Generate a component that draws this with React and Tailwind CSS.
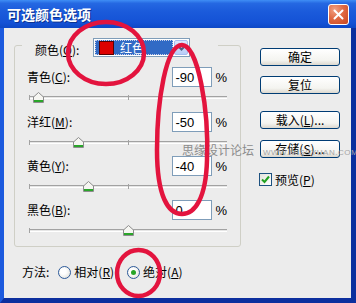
import React from "react";

const rows = [
  { label: "青色", key: "C", value: -90 },
  { label: "洋红", key: "M", value: -50 },
  { label: "黄色", key: "Y", value: -40 },
  { label: "黑色", key: "B", value: 0 },
];

const TRACK = 198;

function Thumb() {
  return (
    <svg width="11" height="11" viewBox="0 0 11 11">
      <path d="M5.5 0.5 L10.5 5 L10.5 10.5 L0.5 10.5 L0.5 5 Z" fill="#f6f6f2" stroke="#8d8d8d" />
      <path d="M1 8 H10 V10 H1 Z" fill="#2aa52a" />
    </svg>
  );
}

function Slider({ value }) {
  const pos = ((value + 100) / 200) * TRACK;
  return (
    <div className="relative ml-[14px] mr-[13px] h-[20px] pt-[9px]">
      <div className="h-[3px] border-t border-[#a2a2a2] bg-[#e6e6e6] border-b border-b-white" />
      <div className="absolute left-0 top-[8px] w-px h-[5px] bg-[#a2a2a2]" />
      <div className="absolute left-[99px] top-[8px] w-px h-[5px] bg-[#a2a2a2]" />
      <div className="absolute top-[5px] flex" style={{ left: pos - 5.5 }}>
        <Thumb />
      </div>
    </div>
  );
}

function Btn({ children, className = "" }) {
  return (
    <div
      className={
        "h-[18px] w-[80px] rounded-[3px] border border-[#003c74] bg-[linear-gradient(to_bottom,#ffffff_0%,#f4f4f0_70%,#dcd8cf_100%)] flex items-center justify-center text-[12px] leading-none " +
        className
      }
    >
      <span>{children}</span>
    </div>
  );
}

function Radio({ checked }) {
  return (
    <span className="w-[13px] h-[13px] rounded-full border border-[#2c5a9a] bg-[radial-gradient(circle_at_40%_40%,#ffffff_30%,#d8d8d0_100%)] flex items-center justify-center">
      {checked && <span className="w-[5px] h-[5px] rounded-full bg-[#27a427]" />}
    </span>
  );
}

export default function App() {
  return (
    <div className="relative w-[356px] h-[303px] overflow-hidden bg-[#ececec] text-[12px] leading-none text-black font-['Noto_Sans_CJK_SC',sans-serif]">
      {/* Title bar */}
      <div className="h-[28px] flex items-center justify-between pl-[7px] pr-[7px] bg-[linear-gradient(to_bottom,#3f8ef5_0%,#2568e2_12%,#1b5bdb_40%,#1452d6_80%,#0d48c6_100%)]">
        <span className="text-white font-bold text-[14px] leading-none [text-shadow:1px_1px_0_#0b3290]">
          可选颜色选项
        </span>
        <div className="w-[21px] h-[21px] rounded-[3px] border border-white bg-[radial-gradient(circle_at_30%_25%,#f2a183_0%,#e06a43_45%,#c9461f_100%)] flex items-center justify-center">
          <svg width="11" height="11" viewBox="0 0 11 11">
            <path d="M1.5 1.5 L9.5 9.5 M9.5 1.5 L1.5 9.5" stroke="white" strokeWidth="2" strokeLinecap="round" />
          </svg>
        </div>
      </div>

      {/* Body */}
      <div className="flex flex-col h-[275px] border-l-[4px] border-r-[5px] border-b-[5px] border-l-[#1c5ade] border-r-[#0c2f9e] border-b-[#0c2f9e] pt-[10px] pl-[10px]">
        <div className="flex">
          <fieldset className="w-[227px] h-[209px] border border-[#cfcfc6] rounded-[3px] m-0 p-0">
            <legend className="ml-[7px] h-[14px] p-0">
              <div className="flex items-start h-[19px] pl-[13px] pr-[28px]">
                <span className="w-[58px] pt-[6px]">
                  颜色(<u>O</u>):
                </span>
                <div className="w-[97px] h-[19px] border border-[#7f9db9] bg-white flex p-[1px]">
                  <div className="flex-1 h-full bg-[#316ac5] border border-dotted border-[#c8d2ea] flex items-center">
                    <span className="ml-[3px] w-[15px] h-[14px] bg-[#dd0000] border border-[#5a0000]" />
                    <span className="ml-[6px] text-white text-[12px]">红色</span>
                  </div>
                  <div className="w-[14px] shrink-0 h-full ml-[1px] rounded-[2px] bg-[linear-gradient(to_bottom,#dce7fd,#b9cdf7)] border border-[#a6bdf0] flex items-center justify-center">
                    <svg width="9" height="6" viewBox="0 0 9 6">
                      <path d="M1 1 L4.5 4.5 L8 1" stroke="#4d6185" strokeWidth="2" fill="none" />
                    </svg>
                  </div>
                </div>
              </div>
            </legend>
            <div className="pt-[15px]">
              {rows.map((r, i) => (
                <div key={r.key} className={i === 0 ? "h-[45px]" : "h-[44px]"}>
                  <div className="flex items-center justify-between h-[20px] pl-[12px] pr-[13px]">
                    <span>
                      {r.label}(<u>{r.key}</u>):
                    </span>
                    <div className="flex items-center">
                      <div className="w-[40px] h-[20px] border border-[#7f9db9] bg-white pl-[2px] flex items-center font-['Liberation_Sans',sans-serif] text-[13px]">
                        {r.value}
                      </div>
                      <span className="ml-[3px] font-['Liberation_Sans',sans-serif] text-[13px]">%</span>
                    </div>
                  </div>
                  <Slider value={r.value} />
                </div>
              ))}
            </div>
          </fieldset>

          <div className="ml-[19px] pt-[10px] flex flex-col w-[80px]">
            <Btn>确定</Btn>
            <Btn className="mt-[10px]">复位</Btn>
            <Btn className="mt-[17px]">
              载入(<u>L</u>)...
            </Btn>
            <Btn className="mt-[11px]">
              存储(<u>S</u>)...
            </Btn>
            <div className="mt-[15px] -ml-[1px] flex items-center">
              <span className="w-[13px] h-[13px] border border-[#1c5180] bg-[linear-gradient(135deg,#e4e4dc,#ffffff)] flex items-center justify-center">
                <svg width="9" height="9" viewBox="0 0 9 9">
                  <path d="M1 4.5 L3.5 7 L8 1.5" stroke="#21a121" strokeWidth="2" fill="none" />
                </svg>
              </span>
              <span className="ml-[3px]">
                预览(<u>P</u>)
              </span>
            </div>
          </div>
        </div>

        <div className="mt-[15px] ml-[8px] flex items-center h-[20px]">
          <span>方法:</span>
          <div className="ml-[9px] flex items-center">
            <Radio />
            <span className="ml-[3px]">
              相对(<u>R</u>)
            </span>
          </div>
          <div className="ml-[13px] flex items-center">
            <Radio checked />
            <span className="ml-[3px]">
              绝对(<u>A</u>)
            </span>
          </div>
        </div>
      </div>

      {/* watermark */}
      <span className="absolute left-[182px] top-[144px] text-[12px] text-[#8c8c8c]">思缘设计论坛</span>
      <span className="absolute left-[263px] top-[149px] text-[8px] tracking-[0.5px] text-[#a6a6a6] font-['Liberation_Sans',sans-serif]">
        WWW.MISSYUAN.COM
      </span>

      {/* red annotation marks */}
      <svg className="absolute left-0 top-0 pointer-events-none" width="356" height="303" viewBox="0 0 356 303">
        <ellipse cx="106" cy="53" rx="38" ry="31" fill="none" stroke="#e3143e" strokeWidth="4.5" />
        <path
          d="M182 45 C198 45 209 110 207 160 C206 198 195 214 182 214 C168 214 157 196 157 150 C157 100 166 45 182 45 Z"
          fill="none"
          stroke="#e3143e"
          strokeWidth="4.5"
        />
        <ellipse cx="138.5" cy="273" rx="21.5" ry="23" fill="none" stroke="#e3143e" strokeWidth="4.5" />
      </svg>
    </div>
  );
}
